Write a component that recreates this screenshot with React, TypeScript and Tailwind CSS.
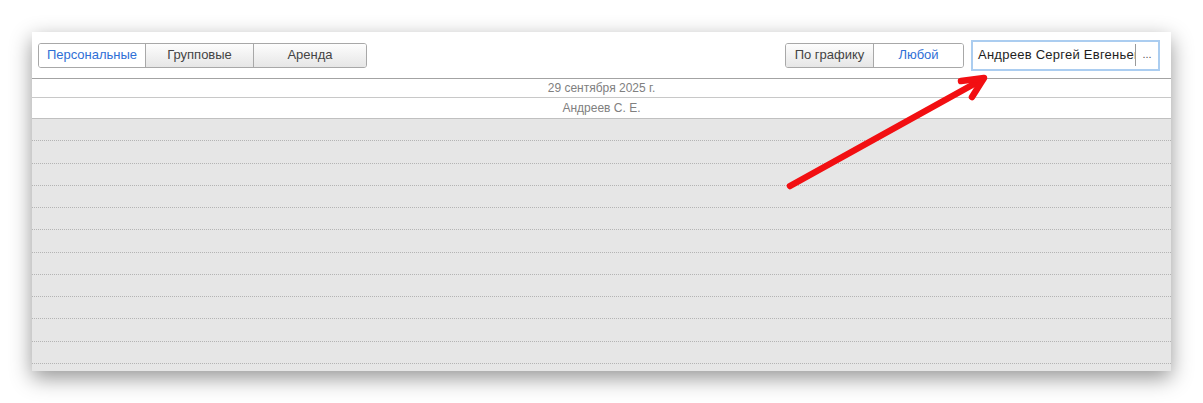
import React from "react";

const font = { fontFamily: '"Liberation Sans", Arial, sans-serif' };

function Btn({ w, active, first, children }: { w: string; active?: boolean; first?: boolean; children: React.ReactNode }) {
  return (
    <div
      className={
        "h-full flex items-center justify-center text-[13px] " +
        w +
        (first ? "" : " border-l border-[#a8a8a8]") +
        (active ? " bg-white text-[#2f6fd6]" : " bg-gradient-to-b from-[#fdfdfd] to-[#e6e6e6] text-[#444444]")
      }
    >
      {children}
    </div>
  );
}

export default function App() {
  const rows = Array.from({ length: 12 });
  return (
    <div className="relative w-[1203px] h-[403px] bg-white overflow-hidden" style={font}>
      <div className="pt-[32px] pl-[32px]">
        <div className="w-[1139px] h-[339px] bg-white flex flex-col shadow-[0_7px_20px_rgba(0,0,0,0.42)]">
          {/* toolbar */}
          <div className="h-[46px] flex items-center pl-[6px] pr-[11px]">
            <div className="flex h-[25px] border border-[#a8a8a8] rounded-[3px] overflow-hidden">
              <Btn w="w-[106px]" active first>Персональные</Btn>
              <Btn w="w-[108px]">Групповые</Btn>
              <Btn w="w-[113px]">Аренда</Btn>
            </div>
            <div className="ml-auto flex h-[25px] border border-[#a8a8a8] rounded-[3px] overflow-hidden">
              <Btn w="w-[87px]" first>По графику</Btn>
              <Btn w="w-[90px]" active>Любой</Btn>
            </div>
            <div className="ml-[7px] w-[189px] h-[31px] border-2 border-[#abcdf0] bg-white flex items-center">
              <div className="flex-1 min-w-0 overflow-hidden whitespace-nowrap pl-[5px] text-[13px] tracking-[0.25px] text-[#1e1e1e]">
                Андреев Сергей Евгеньевич
              </div>
              <div className="w-px h-[22px] bg-[#9a9a9a]" />
              <div className="w-[22px] text-center text-[11px] text-[#555] leading-none pb-[1px]">...</div>
            </div>
          </div>
          {/* header rows */}
          <div className="h-[19px] border-t border-[#a3a3a3] flex items-center justify-center text-[12px] text-[#808080]">
            29 сентября 2025 г.
          </div>
          <div className="h-[21px] border-t border-[#c8c8c8] flex items-center justify-center text-[12px] text-[#808080]">
            Андреев С. Е.
          </div>
          <div className="flex-1 border-t border-[#c0c0c0] bg-[#e6e6e6] overflow-hidden">
            {rows.map((_, i) => (
              <div key={i} className="h-[22.27px] border-b border-dotted border-[#b4b4b4]" />
            ))}
          </div>
        </div>
      </div>
      <svg className="absolute left-0 top-0 pointer-events-none" width="1203" height="403" viewBox="0 0 1203 403">
        <g stroke="#f20f12" strokeWidth="6.5" strokeLinecap="round" strokeLinejoin="round" fill="none">
          <line x1="790" y1="186" x2="983" y2="79" />
          <polyline points="961,81 984,78 972,97" />
        </g>
      </svg>
    </div>
  );
}
